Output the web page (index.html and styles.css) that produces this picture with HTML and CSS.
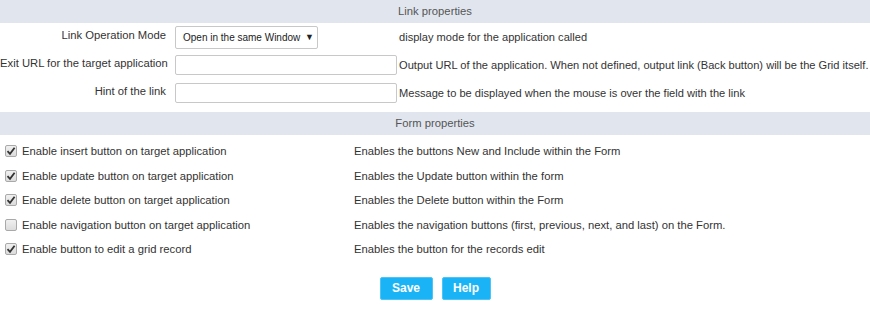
FILE: index.html
```html
<!DOCTYPE html>
<html lang="en">
<head>
  <meta charset="UTF-8">
  <title>Link properties</title>
  <link rel="stylesheet" href="styles.css">
</head>
<body>
  <div class="section-title">Link properties</div>

  <div class="link-row">
    <label class="field-label" for="mode">Link Operation Mode</label>
    <div class="field">
      <div class="select" id="mode">
        <span>Open in the same Window</span>
        <span class="arrow">&#9660;</span>
      </div>
    </div>
    <div class="field-help">display mode for the application called</div>
  </div>

  <div class="link-row">
    <label class="field-label" for="exitUrl">Exit URL for the target application</label>
    <div class="field"><input type="text" id="exitUrl"></div>
    <div class="field-help">Output URL of the application. When not defined, output link (Back button) will be the Grid itself.</div>
  </div>

  <div class="link-row">
    <label class="field-label" for="hint">Hint of the link</label>
    <div class="field"><input type="text" id="hint"></div>
    <div class="field-help">Message to be displayed when the mouse is over the field with the link</div>
  </div>

  <div class="section-title form-title">Form properties</div>

  <div class="options">
    <div class="option-row">
      <label class="check"><span class="box checked"><svg viewBox="0 0 12 12" width="12" height="12"><path d="M2.5 6.2 L5 8.8 L9.6 2.8" /></svg></span>Enable insert button on target application</label>
      <div class="option-help">Enables the buttons New and Include within the Form</div>
    </div>
    <div class="option-row">
      <label class="check"><span class="box checked"><svg viewBox="0 0 12 12" width="12" height="12"><path d="M2.5 6.2 L5 8.8 L9.6 2.8" /></svg></span>Enable update button on target application</label>
      <div class="option-help">Enables the Update button within the form</div>
    </div>
    <div class="option-row">
      <label class="check"><span class="box checked"><svg viewBox="0 0 12 12" width="12" height="12"><path d="M2.5 6.2 L5 8.8 L9.6 2.8" /></svg></span>Enable delete button on target application</label>
      <div class="option-help">Enables the Delete button within the Form</div>
    </div>
    <div class="option-row">
      <label class="check"><span class="box"></span>Enable navigation button on target application</label>
      <div class="option-help">Enables the navigation buttons (first, previous, next, and last) on the Form.</div>
    </div>
    <div class="option-row">
      <label class="check"><span class="box checked"><svg viewBox="0 0 12 12" width="12" height="12"><path d="M2.5 6.2 L5 8.8 L9.6 2.8" /></svg></span>Enable button to edit a grid record</label>
      <div class="option-help">Enables the button for the records edit</div>
    </div>
  </div>

  <div class="actions">
    <button class="btn save">Save</button>
    <button class="btn help">Help</button>
  </div>
</body>
</html>
```

FILE: styles.css
```css
body {
  margin: 0;
  background: #fff;
  font-family: "Liberation Sans", Arial, sans-serif;
  font-size: 11.25px;
  color: #333;
}

.section-title {
  background: #e1e6ee;
  color: #555;
  text-align: center;
  height: 23px;
  line-height: 23px;
}

.form-title {
  margin-top: 5px;
}

.link-row {
  display: grid;
  grid-template-columns: 166px 224px 1fr;
  align-items: center;
  height: 28px;
}

.field-label {
  text-align: right;
  padding-bottom: 5px;
  white-space: nowrap;
}

.field {
  padding-left: 9px;
}

.field input {
  box-sizing: border-box;
  width: 222px;
  height: 20px;
  border: 1px solid #c8c8c8;
  border-radius: 2px;
  padding: 2px 4px;
  font: inherit;
}

.select {
  box-sizing: border-box;
  width: 143px;
  height: 23px;
  border: 1px solid #c8c8c8;
  border-radius: 2px;
  display: flex;
  align-items: center;
  justify-content: space-between;
  padding: 0 3px 0 7px;
  font-size: 10px;
  color: #222;
  white-space: nowrap;
}

.select .arrow {
  font-size: 9px;
}

.field-help {
  padding-left: 9px;
  font-size: 11.1px;
  white-space: nowrap;
}

.options {
  padding-top: 4px;
}

.option-row {
  display: grid;
  grid-template-columns: 354px 1fr;
  align-items: center;
  height: 24.5px;
}

.check {
  display: flex;
  align-items: center;
  padding-left: 5px;
}

.box {
  box-sizing: border-box;
  width: 12px;
  height: 12px;
  margin-right: 5px;
  border: 1px solid #a9a9a9;
  border-radius: 2px;
  background: linear-gradient(#f0f0f0, #dcdcdc);
  display: inline-flex;
}

.box svg {
  margin: -1px;
}

.box path {
  fill: none;
  stroke: #333;
  stroke-width: 1.8;
}

.actions {
  display: flex;
  justify-content: center;
  gap: 9px;
  margin-top: 15px;
}

.btn {
  height: 23px;
  border: 1px solid #4cc4f8;
  border-radius: 2px;
  background: #1ab4f6;
  color: #fff;
  font-family: "Liberation Sans", Arial, sans-serif;
  font-size: 12px;
  font-weight: bold;
  padding: 0;
  cursor: pointer;
}

.btn.save {
  width: 53px;
}

.btn.help {
  width: 49px;
}
```
